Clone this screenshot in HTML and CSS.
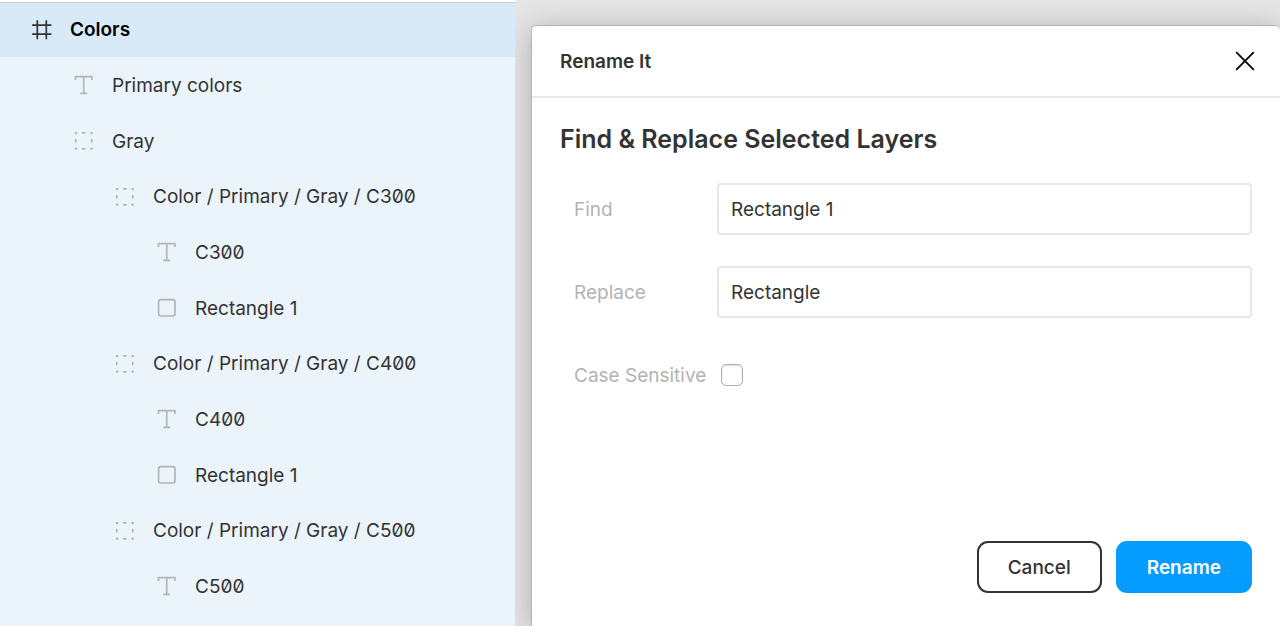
FILE: index.html
```
<!doctype html>
<html lang="en">
<head>
    <meta charset="UTF-8">
    <title>Rename It</title>
    <link rel="stylesheet" href="styles.css">
</head>
<body>
<!-- layer icons -->
<svg class="sprite" aria-hidden="true">
    <symbol id="i-frame" viewBox="0 0 20 20">
        <path d="M5.3 0.2v19M14.3 0.2v19M0.2 5.2h19.2M0.2 14.2h19.2" fill="none" stroke="currentColor" stroke-width="1.7"/>
    </symbol>
    <symbol id="i-text" viewBox="0 0 20 20">
        <path d="M1.5 5V1.7h16.4V5M9.7 1.7v16.6M6.2 18.3h7" fill="none" stroke="currentColor" stroke-width="1.7"/>
    </symbol>
    <symbol id="i-group" viewBox="0 0 20 20">
        <path d="M1 1.8h2.2M8 1.8h3.6M16.4 1.8h2.2M1 17.9h2.2M8 17.9h3.6M16.4 17.9h2.2M1.8 1v2.2M1.8 8v3.6M1.8 16.5v2.2M17.8 1v2.2M17.8 8v3.6M17.8 16.5v2.2" fill="none" stroke="currentColor" stroke-width="1.7"/>
    </symbol>
    <symbol id="i-rect" viewBox="0 0 20 20">
        <rect x="1.6" y="1.6" width="16.4" height="16.4" rx="2.4" fill="none" stroke="currentColor" stroke-width="1.7"/>
    </symbol>
</svg>

<div class="app">
    <nav class="layers" aria-label="Layers">
        <ul>
            <li>
                <div class="layer frame"><svg><use href="#i-frame"/></svg>Colors</div>
                <ul>
                    <li><div class="layer"><svg><use href="#i-text"/></svg>Primary colors</div></li>
                    <li>
                        <div class="layer"><svg><use href="#i-group"/></svg>Gray</div>
                        <ul>
                            <li>
                                <div class="layer swatch"><svg><use href="#i-group"/></svg>Color / Primary / Gray / C300</div>
                                <ul>
                                    <li><div class="layer"><svg><use href="#i-text"/></svg>C300</div></li>
                                    <li><div class="layer"><svg><use href="#i-rect"/></svg>Rectangle 1</div></li>
                                </ul>
                            </li>
                            <li>
                                <div class="layer swatch"><svg><use href="#i-group"/></svg>Color / Primary / Gray / C400</div>
                                <ul>
                                    <li><div class="layer"><svg><use href="#i-text"/></svg>C400</div></li>
                                    <li><div class="layer"><svg><use href="#i-rect"/></svg>Rectangle 1</div></li>
                                </ul>
                            </li>
                            <li>
                                <div class="layer swatch"><svg><use href="#i-group"/></svg>Color / Primary / Gray / C500</div>
                                <ul>
                                    <li><div class="layer"><svg><use href="#i-text"/></svg>C500</div></li>
                                </ul>
                            </li>
                        </ul>
                    </li>
                </ul>
            </li>
        </ul>
    </nav>

    <main class="canvas">
        <form class="dialog" role="dialog" aria-labelledby="dialog-title" onsubmit="return false">
            <header>
                <h1 id="dialog-title">Rename It</h1>
                <button type="button" class="close" aria-label="Close">
                    <svg viewBox="0 0 20 20"><path d="M1.2 1.2l17.6 17.6M18.8 1.2L1.2 18.8" fill="none" stroke="currentColor" stroke-width="1.8"/></svg>
                </button>
            </header>
            <div class="content">
                <h2>Find &amp; Replace Selected Layers</h2>
                <div class="field">
                    <label for="find">Find</label>
                    <input type="text" id="find" value="Rectangle 1">
                </div>
                <div class="field">
                    <label for="replace">Replace</label>
                    <input type="text" id="replace" value="Rectangle">
                </div>
                <div class="field">
                    <label for="case">Case Sensitive</label>
                    <input type="checkbox" id="case">
                </div>
            </div>
            <footer>
                <button type="button" class="btn">Cancel</button>
                <button type="submit" class="btn primary">Rename</button>
            </footer>
        </form>
    </main>
</div>
</body>
</html>
```

FILE: styles.css
```
*{margin:0;padding:0;box-sizing:border-box;}
body,input,button{
    font-family:Inter,"Liberation Sans",sans-serif;
    font-size:19px;
    color:#333;
}
ul{list-style:none;}
.sprite{display:none;}
.app{
    display:grid;
    grid-template-columns:minmax(0,515px) minmax(0,1fr);
    min-height:100vh;
}

/* layers panel */
.layers{
    background:#ecf4fb;
    border-top:2px solid #fff;
    font-feature-settings:"zero";
    white-space:nowrap;
    overflow:hidden;
}
.layer{
    display:flex;
    align-items:center;
    gap:18px;
    height:56px;
    padding-left:32px;
}
.layer svg{
    flex:none;
    width:20px;
    height:20px;
    color:#b0b5b9;
}
.layers ul ul .layer{padding-left:74px;}
.layers ul ul ul .layer{padding-left:115px;}
.layers ul ul ul ul .layer{padding-left:157px;}
.layer.frame{
    height:55px;
    background:#d8eaf8;
    box-shadow:inset 0 1px 0 #c3cfdf;
    color:#000;
    font-weight:600;
}
.layer.frame svg{color:#333;}
.layer.swatch{height:55px;}

/* plugin window */
.canvas{
    display:flex;
    background:#e5e5e5;
    padding:25px 0 0 16px;
    overflow:hidden;
}
.dialog{
    flex:1;
    display:flex;
    flex-direction:column;
    background:#fff;
    border:1px solid #b5b5b5;
    border-width:1px 0 0 1px;
    border-radius:5px 5px 0 0;
    box-shadow:0 4px 28px rgba(0,0,0,.25);
}
.dialog header{
    display:flex;
    align-items:center;
    justify-content:space-between;
    height:72px;
    padding:0 25px 0 28px;
    border-bottom:2px solid #e9e9e9;
}
h1{
    font-size:19px;
    font-weight:600;
}
.close{
    width:20px;
    height:20px;
    border:0;
    background:none;
    color:#000;
    cursor:pointer;
}
.close svg{display:block;}
.content{padding:25px 28px;}
h2{
    font-size:25px;
    font-weight:600;
    line-height:32px;
    margin-bottom:28px;
}
.field{
    display:flex;
    align-items:center;
    height:52px;
    padding-left:14px;
    margin-bottom:31px;
}
.field label{
    min-width:143px;
    color:#b3b3b3;
}
.field input[type=text]{
    flex:1;
    min-width:0;
    height:52px;
    padding:0 12px;
    border:2px solid #e8e8e8;
    border-radius:4px;
    background:#fff;
    outline:none;
}
.field input[type=checkbox]{
    appearance:none;
    width:22px;
    height:22px;
    margin-left:4px;
    border:1px solid #b0b0b0;
    border-radius:5px;
    background:#fff;
    box-shadow:inset 0 1px 2px rgba(0,0,0,.15);
}
.field input[type=checkbox]:checked{background:#049cff;}
.dialog footer{
    display:flex;
    justify-content:flex-end;
    gap:14px;
    margin-top:auto;
    padding:0 28px 33px;
}
.btn{
    height:52px;
    padding:0 29px;
    border:2px solid #333;
    border-radius:11px;
    background:#fff;
    font-weight:500;
    cursor:pointer;
}
.btn.primary{
    border-color:#049cff;
    background:#049cff;
    color:#fff;
    font-weight:600;
}
```
